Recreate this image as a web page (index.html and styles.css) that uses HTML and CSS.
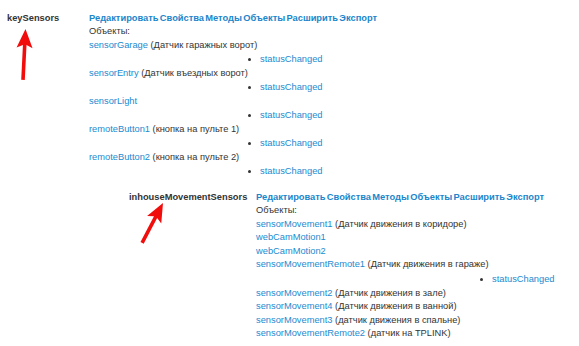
FILE: index.html
```html
<!DOCTYPE html>
<html>
<head>
<meta charset="utf-8">
<link rel="stylesheet" href="styles.css">
</head>
<body>
<div class="page">
  <div class="cls cls-top">
    <div class="label">keySensors</div>
    <div class="content">
      <div class="actions"><a>Редактировать</a> <a>Свойства</a> <a>Методы</a> <a>Объекты</a> <a>Расширить</a> <a>Экспорт</a></div>
      <div class="line">Объекты:</div>
      <div class="line"><a>sensorGarage</a> (Датчик гаражных ворот)</div>
      <ul class="methods m1"><li><a>statusChanged</a></li></ul>
      <div class="line"><a>sensorEntry</a> (Датчик въездных ворот)</div>
      <ul class="methods m1"><li><a>statusChanged</a></li></ul>
      <div class="line"><a>sensorLight</a></div>
      <ul class="methods m1"><li><a>statusChanged</a></li></ul>
      <div class="line"><a>remoteButton1</a> (кнопка на пульте 1)</div>
      <ul class="methods m1"><li><a>statusChanged</a></li></ul>
      <div class="line"><a>remoteButton2</a> (кнопка на пульте 2)</div>
      <ul class="methods m1"><li><a>statusChanged</a></li></ul>
    </div>
  </div>
  <div class="cls cls-sub">
    <div class="label">inhouseMovementSensors</div>
    <div class="content">
      <div class="actions"><a>Редактировать</a> <a>Свойства</a> <a>Методы</a> <a>Объекты</a> <a>Расширить</a> <a>Экспорт</a></div>
      <div class="line">Объекты:</div>
      <div class="line"><a>sensorMovement1</a> (Датчик движения в коридоре)</div>
      <div class="line"><a>webCamMotion1</a></div>
      <div class="line"><a>webCamMotion2</a></div>
      <div class="line"><a>sensorMovementRemote1</a> (Датчик движения в гараже)</div>
      <ul class="methods m2"><li><a>statusChanged</a></li></ul>
      <div class="line"><a>sensorMovement2</a> (Датчик движения в зале)</div>
      <div class="line"><a>sensorMovement4</a> (Датчик движения в ванной)</div>
      <div class="line"><a>sensorMovement3</a> (датчик движения в спальне)</div>
      <div class="line"><a>sensorMovementRemote2</a> (датчик на TPLINK)</div>
    </div>
  </div>
</div>
<svg class="arrows" width="579" height="346" viewBox="0 0 579 346">
  <polygon transform="translate(25.5 29) rotate(2.8)" points="0,0 8,19 1.8,16 1.8,51 -1.8,51 -1.8,16 -8,19" />
  <polygon transform="translate(163 203) rotate(27.7)" points="0,0 8,19 1.8,16 1.8,45 -1.8,45 -1.8,16 -8,19" />
</svg>
</body>
</html>
```

FILE: styles.css
```css
html, body {
  margin: 0;
  padding: 0;
  background: #ffffff;
}
body {
  font-family: "Liberation Sans", Arial, sans-serif;
  font-size: 9.3px;
  color: #333333;
  width: 579px;
  height: 346px;
  overflow: hidden;
  position: relative;
}
.page {
  padding-top: 11px;
}
a {
  color: #1c8ad0;
  text-decoration: none;
}
.cls {
  display: flex;
  align-items: flex-start;
}
.cls-top .label {
  width: 82px;
  padding-left: 7px;
}
.cls-sub {
  margin-top: 11px;
  padding-left: 129px;
}
.cls-sub .label {
  width: 127px;
}
.label {
  font-weight: bold;
  color: #333333;
  line-height: 14px;
}
.actions {
  font-weight: bold;
  line-height: 14px;
  word-spacing: -1.3px;
  white-space: nowrap;
}
.actions a {
  color: #1a86cc;
}
.line {
  line-height: 13.5px;
  white-space: nowrap;
}
.methods {
  list-style: disc;
  margin: 0.6px 0 0.6px 0;
  padding: 0;
  line-height: 13.5px;
}
.m1 {
  padding-left: 171px;
}
.m2 {
  padding-left: 236px;
  margin: 1px 0 0.5px 0;
}
.arrows {
  position: absolute;
  left: 0;
  top: 0;
  pointer-events: none;
}
.arrows polygon {
  fill: #f20d0d;
}
```
